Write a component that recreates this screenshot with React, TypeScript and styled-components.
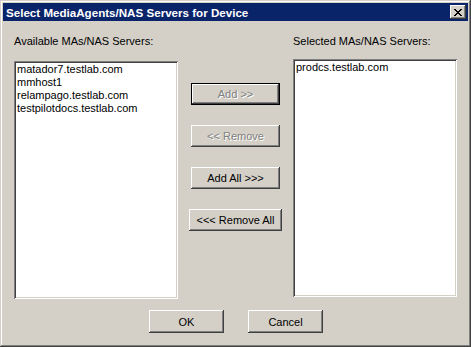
import React from "react";
import styled, { createGlobalStyle, css } from "styled-components";

const Global = createGlobalStyle`
  html, body { margin: 0; padding: 0; background: #d4d0c8; }
  body { font-family: "Liberation Sans", Arial, sans-serif; font-size: 11px; }
`;

const raised = css`
  background: #d4d0c8;
  box-shadow: inset -1px -1px #404040, inset 1px 1px #ffffff,
    inset -2px -2px #808080, inset 2px 2px #d4d0c8;
`;

const Window = styled.div`
  width: 471px;
  height: 347px;
  box-sizing: border-box;
  padding: 3px;
  background: #d4d0c8;
  box-shadow: inset -1px -1px #404040, inset 1px 1px #d4d0c8,
    inset -2px -2px #808080, inset 2px 2px #ffffff;
  display: flex;
  flex-direction: column;
`;

const TitleBar = styled.div`
  height: 18px;
  background: #0a246a;
  display: flex;
  align-items: center;
  justify-content: space-between;
  padding: 0 2px 0 3px;
`;

const Title = styled.span`
  color: #ffffff;
  font-weight: bold;
  font-size: 11.6px;
  font-family: "Liberation Sans", Arial, sans-serif;
  white-space: nowrap;
`;

const CloseButton = styled.div`
  ${raised};
  width: 16px;
  height: 14px;
  display: flex;
  align-items: center;
  justify-content: center;
`;

const Body = styled.div`
  display: grid;
  grid-template-columns: 164px 1fr 164px;
  padding: 14px 11px 0 11px;
`;

const Column = styled.div`
  display: flex;
  flex-direction: column;
`;

const Label = styled.div`
  line-height: 13px;
  color: #000;
  white-space: nowrap;
`;

const ListBox = styled.div<{ $offset: number }>`
  margin-top: ${(p) => p.$offset}px;
  height: 238px;
  box-sizing: border-box;
  background: #ffffff;
  padding: 2px 3px;
  box-shadow: inset 1px 1px #808080, inset -1px -1px #ffffff,
    inset 2px 2px #404040, inset -2px -2px #d4d0c8;
`;

const Item = styled.div`
  line-height: 13px;
  color: #000;
  white-space: nowrap;
`;

const Middle = styled.div`
  display: flex;
  flex-direction: column;
  align-items: center;
  padding-top: 48px;
  gap: 20px;
`;

const Button = styled.div<{ $width: number; $height?: number; $disabled?: boolean; $default?: boolean }>`
  ${raised};
  width: ${(p) => p.$width}px;
  height: ${(p) => p.$height ?? 22}px;
  box-sizing: border-box;
  display: flex;
  align-items: center;
  justify-content: center;
  color: ${(p) => (p.$disabled ? "#808080" : "#000")};
  text-shadow: ${(p) => (p.$disabled ? "1px 1px 0 #ffffff" : "none")};
  white-space: nowrap;
  ${(p) =>
    p.$default &&
    css`
      box-shadow: inset 1px 1px #000, inset -1px -1px #000,
        inset -2px -2px #404040, inset 2px 2px #ffffff,
        inset -3px -3px #808080;
    `}
`;

const Footer = styled.div`
  display: flex;
  justify-content: center;
  gap: 24px;
  margin-top: 11px;
  padding-left: 1px;
`;

const available = [
  "matador7.testlab.com",
  "mmhost1",
  "relampago.testlab.com",
  "testpilotdocs.testlab.com",
];
const selected = ["prodcs.testlab.com"];

export default function App() {
  return (
    <>
      <Global />
      <Window>
        <TitleBar>
          <Title>Select MediaAgents/NAS Servers for Device</Title>
          <CloseButton>
            <svg width="8" height="7" viewBox="0 0 8 7" shapeRendering="crispEdges">
              <path
                d="M0 0h2v1h-2zM6 0h2v1h-2zM1 1h2v1h-2zM5 1h2v1h-2zM2 2h4v1h-4zM3 3h2v1h-2zM2 4h4v1h-4zM1 5h2v1h-2zM5 5h2v1h-2zM0 6h2v1h-2zM6 6h2v1h-2z"
                fill="#000"
              />
            </svg>
          </CloseButton>
        </TitleBar>
        <Body>
          <Column>
            <Label>Available MAs/NAS Servers:</Label>
            <ListBox $offset={13}>
              {available.map((a) => (
                <Item key={a}>{a}</Item>
              ))}
            </ListBox>
          </Column>
          <Middle>
            <Button $width={89} $disabled $default>
              Add &gt;&gt;
            </Button>
            <Button $width={89} $disabled>
              &lt;&lt; Remove
            </Button>
            <Button $width={89}>Add All &gt;&gt;&gt;</Button>
            <Button $width={93}>&lt;&lt;&lt; Remove All</Button>
          </Middle>
          <Column>
            <Label>Selected MAs/NAS Servers:</Label>
            <ListBox $offset={11}>
              {selected.map((a) => (
                <Item key={a}>{a}</Item>
              ))}
            </ListBox>
          </Column>
        </Body>
        <Footer>
          <Button $width={75} $height={23}>OK</Button>
          <Button $width={75} $height={23}>Cancel</Button>
        </Footer>
      </Window>
    </>
  );
}
